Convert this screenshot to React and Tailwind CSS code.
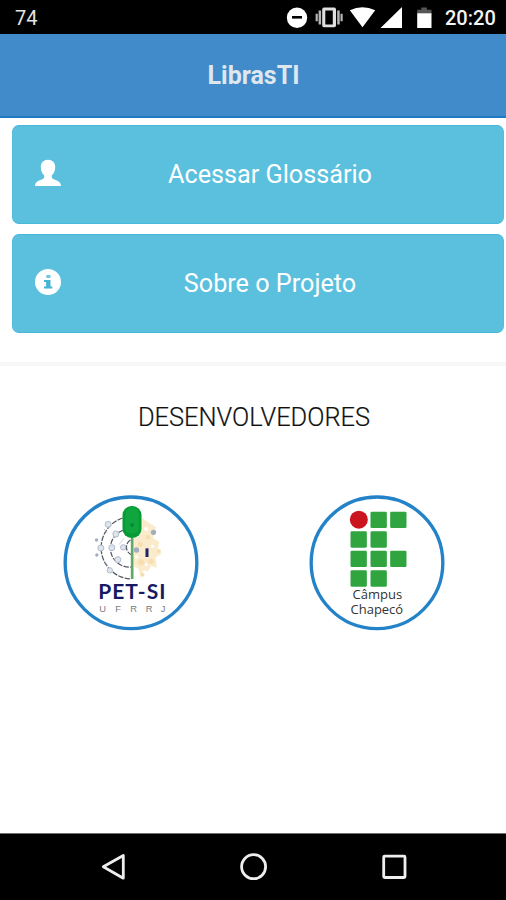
import React from "react";

function StatusBar() {
  return (
    <div className="flex h-[34px] shrink-0 items-center justify-between bg-black pl-[15px] pr-[10px] text-[#e4e4e4]">
      <span className="pt-[2px] text-[20px] leading-[32px]">74</span>
      <div className="flex items-center">
        <svg width="164" height="34" viewBox="281 0 164 34" fill="#fff">
          <circle cx="297" cy="17.7" r="10.2" />
          <rect x="292" y="16" width="10" height="2.6" fill="#000" />
          <path fillRule="evenodd" d="M324 7.600H334.200Q336 7.600 336 9.400V25.400Q336 27.200 334.200 27.200H324Q322.200 27.200 322.200 25.400V9.400Q322.200 7.600 324 7.600ZM325.300 10.400V24.400H332.800V10.400Z" fill="#e0e0e0" />
          <path d="M318.6 10.5h2.5v14h-2.5zM337.200 10.5h2.500v14h-2.500zM315.600 13.800h2.200v7.400h-2.200zM340.500 13.800h2.200v7.400h-2.200z" fill="#b5b5b5" />
          <path d="M349.8 10.3Q362.5 4 375.2 10.3L362.5 27.3Z" />
          <path d="M402 7v21h-21.5Z" />
          <path d="M421.3 7.5h5.6v2.2h4.6v4.5h-14.3V9.7h4.1Z" fill="#565656" />
          <rect x="417.2" y="13.3" width="14.3" height="14.7" />
        </svg>
        <span className="w-[51px] whitespace-nowrap pt-[2px] text-[20px] font-medium leading-[32px] text-[#f4f4f4]">20:20</span>
      </div>
    </div>
  );
}

function MenuButton({ icon, label }) {
  return (
    <button className="relative flex h-[99px] w-[492px] items-center justify-center rounded-[7px] border border-[#46b8da] border-x-[#55bcdb] bg-[#5bc0de] pl-[24px] pt-px text-[25.2px] text-white">
      <span className="absolute left-[21px] top-[33px]">{icon}</span>
      <span className="whitespace-nowrap">{label}</span>
    </button>
  );
}

function UserIcon() {
  return (
    <svg width="28" height="28" viewBox="0 0 28 28" fill="#fff">
      <path d="M14 .8c4.400 0 7.200 3 7.200 7.300c0 3.600-1.200 6.300-3.400 8.300c-.3 2.400.4 3.200 2.500 4.100c3.500 1.500 6.500 2.200 6.700 6.500H1c.2-4.300 3.200-5 6.700-6.500c2.100-.9 2.800-1.700 2.500-4.100C8 14.400 6.800 11.700 6.800 8.100C6.800 3.800 9.600.8 14 .8Z" />
    </svg>
  );
}

function InfoIcon() {
  return (
    <svg width="28" height="28" viewBox="0 0 28 28">
      <circle cx="14" cy="14" r="13" fill="#fff" />
      <rect x="12.200" y="7" width="4.400" height="3" rx="1" fill="#6fc6e0" />
      <path d="M10 12.100h6.500v6.500h1.800v2H10v-2h2.100v-4.500H10Z" fill="#46b4d4" />
    </svg>
  );
}

function PetLogo() {
  return (
    <svg width="136" height="136" viewBox="25.500 16 408 408">
      <circle cx="229.500" cy="219.500" r="197.500" fill="#fff" stroke="#2482c8" strokeWidth="10" />
      <path d="M262 84L279 96L304 112L296 145L315 158L308 180L322 192L303 203L307 234L289 229L280 246L267 241L260 266L252 238L238 229L237 148L253 139Z" fill="#fbebcd" />
      <g fill="#f8deac">
        <circle cx="257" cy="164" r="8" />
        <circle cx="290" cy="215" r="8" />
        <circle cx="260" cy="218" r="9" />
        <circle cx="280" cy="143" r="7" />
        <circle cx="313" cy="184" r="6" />
        <circle cx="264" cy="255" r="6" />
      </g>
      <g fill="#fff">
        <circle cx="246" cy="202" r="5" />
        <circle cx="294" cy="170" r="5" />
        <circle cx="275" cy="118" r="6" />
        <circle cx="275" cy="225" r="4" />
      </g>
      <g fill="none" stroke="#555961" strokeWidth="3.800" strokeDasharray="16 4">
        <path d="M204 85A94 94 0 0 0 229 268" />
        <path d="M205 122A57 57 0 0 0 232 232" />
        <path d="M228 151A25 25 0 0 0 230 195" />
      </g>
      <g fill="#dfe5ed" stroke="#b0bac9" strokeWidth="3">
        <circle cx="161" cy="104" r="9" />
        <circle cx="184" cy="133" r="9" />
        <circle cx="139" cy="175" r="9" />
        <circle cx="172" cy="174" r="9" />
        <circle cx="206" cy="173" r="8" />
        <circle cx="190" cy="210" r="9" />
        <circle cx="166" cy="242" r="8" />
      </g>
      <g fill="#a3adc1">
        <circle cx="126" cy="151" r="5" />
        <circle cx="127" cy="196" r="5" />
        <circle cx="246" cy="181" r="8" />
        <circle cx="297" cy="128" r="8" />
      </g>
      <path d="M149 118l10 13M150 214l12 16M210 145l-17 20" stroke="#bac3d0" strokeWidth="2" />
      <rect x="229" y="145" width="8" height="123" fill="#62a968" />
      <rect x="204" y="49" width="57" height="96" rx="27" fill="#079b36" />
      <path d="M212 75Q214 54 233 53Q252 54 253 75V119Q249 132 233 132Q216 132 212 119Z" fill="#10a53e" />
      <circle cx="233" cy="106" r="5" fill="#078330" />
      <rect x="273" y="176" width="9" height="26" fill="#202665" />
      <text x="131" y="328" textLength="202" lengthAdjust="spacing" fontFamily="Lato, sans-serif" fontWeight="700" fontSize="63" fill="#171a63">PET-SI</text>
      <g fontFamily="'Liberation Sans', sans-serif" fontSize="28" fill="#7c7c7c" textAnchor="middle">
        <text x="144" y="368">U</text>
        <text x="191" y="368">F</text>
        <text x="237" y="368">R</text>
        <text x="284" y="368">R</text>
        <text x="326" y="368">J</text>
      </g>
    </svg>
  );
}

const squares = [[213, 66], [272, 66], [153, 125], [213, 125], [153, 183], [213, 183], [272, 183], [153, 242], [213, 242]];

function CampusLogo() {
  return (
    <svg width="136" height="136" viewBox="28.500 16 408 408">
      <circle cx="232.500" cy="219.500" r="197.500" fill="#fff" stroke="#2482c8" strokeWidth="10" />
      <circle cx="178" cy="90" r="27" fill="#cb151e" />
      {squares.map(([x, y]) => (
        <rect key={x + "-" + y} x={x} y={y} width="49" height="49" rx="4" fill="#2fa43f" />
      ))}
      <g fontFamily="'Open Sans', sans-serif" fontSize="40" fill="#333">
        <text x="159" y="329" textLength="149" lengthAdjust="spacingAndGlyphs">Câmpus</text>
        <text x="153" y="373" textLength="158" lengthAdjust="spacingAndGlyphs">Chapecó</text>
      </g>
    </svg>
  );
}

function NavBar() {
  return (
    <nav className="flex h-[67px] shrink-0 items-center border-t border-[#707070] bg-black">
      <svg width="506" height="66" viewBox="0 834 506 66" fill="none" stroke="#eee" strokeWidth="2.800">
        <path d="M123.300 855.500V878.200L103.300 866.800Z" strokeLinejoin="round" />
        <circle cx="253.600" cy="866.700" r="12" />
        <rect x="383.700" y="856.200" width="21.300" height="21.300" rx="1" />
      </svg>
    </nav>
  );
}

export default function App() {
  return (
    <div className="flex h-[900px] w-[506px] flex-col overflow-hidden bg-white font-['Roboto',sans-serif]">
      <StatusBar />
      <header className="flex h-[84px] shrink-0 items-center justify-center border-b-2 border-[#1f7ac2] bg-[#428bca] pl-px pt-[2px] text-[25px] font-bold text-[#dfe7ee]">
        LibrasTI
      </header>
      <main className="flex flex-1 flex-col">
        <div className="flex flex-col gap-[10px] pl-[12px] pt-[7px]">
          <MenuButton icon={<UserIcon />} label="Acessar Glossário" />
          <MenuButton icon={<InfoIcon />} label="Sobre o Projeto" />
        </div>
        <div className="mt-[29px] h-[4px] bg-[#f7f7f7]" />
        <h2 className="mt-[36px] pl-[2px] text-center text-[25.400px] font-light leading-[30px] text-[#111] [-webkit-text-stroke:0.200px_#111]">DESENVOLVEDORES</h2>
        <div className="mt-[63px] flex gap-[110px] pl-[63px]">
          <PetLogo />
          <CampusLogo />
        </div>
      </main>
      <NavBar />
    </div>
  );
}
